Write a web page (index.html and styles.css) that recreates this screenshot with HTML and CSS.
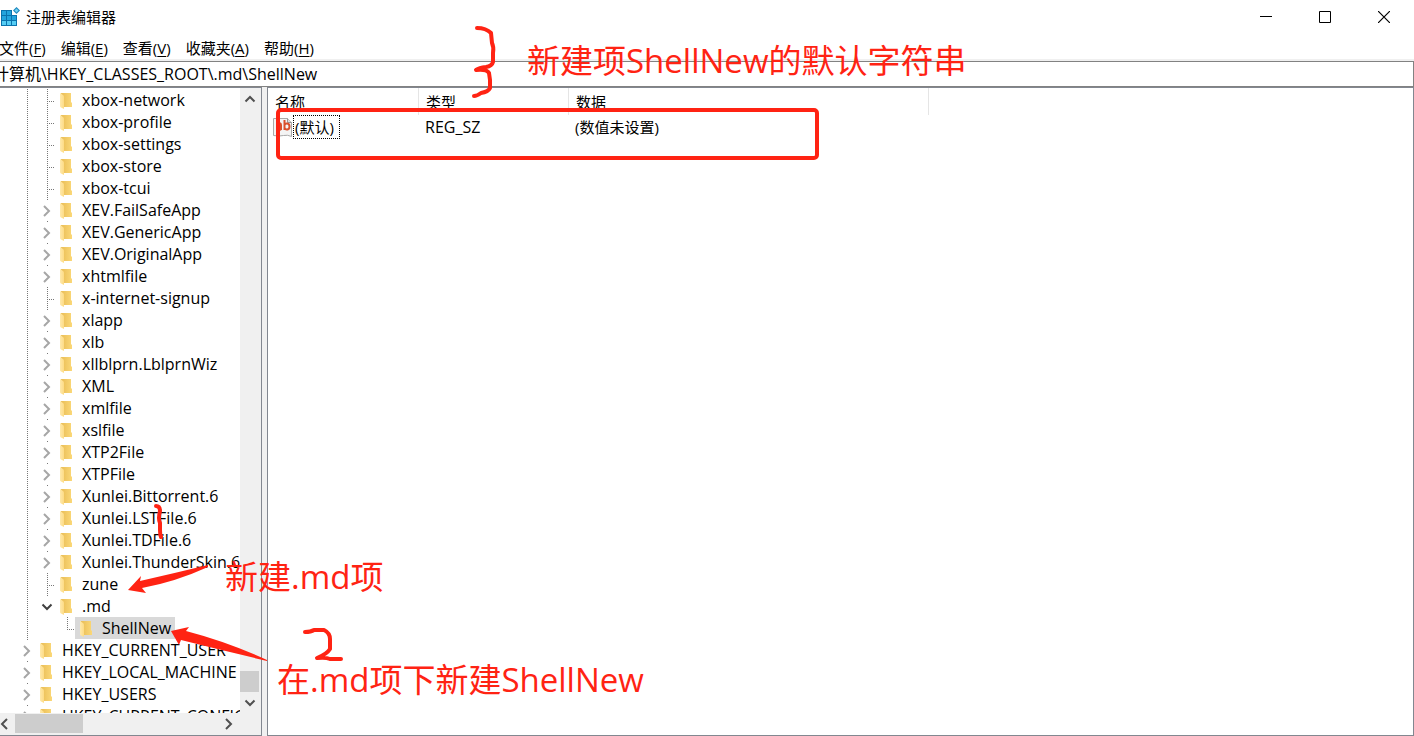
FILE: index.html
```html
<!DOCTYPE html>
<html lang="zh-CN">
<head>
<meta charset="utf-8">
<title>注册表编辑器</title>
<link rel="stylesheet" href="styles.css">
</head>
<body>
<svg class="defs" width="0" height="0" aria-hidden="true">
  <linearGradient id="fold-front" x1="0" y1="0" x2="1" y2="0"><stop offset="0" stop-color="#ffe9ab"/><stop offset="1" stop-color="#fddb85"/></linearGradient>
  <linearGradient id="fold-back" x1="0" y1="0" x2="1" y2="0"><stop offset="0" stop-color="#e9bd55"/><stop offset="1" stop-color="#fbd878"/></linearGradient>
  <symbol id="folder" viewBox="0 0 12 17"><path d="M1 1h10v9l1 1v4H3z" fill="url(#fold-back)"/><path d="M0 1l3 2q1 .5 1 2v12l-3-1.500q-1-.5-1-1.500z" fill="url(#fold-front)"/></symbol>
  <symbol id="right" viewBox="0 0 8 12"><path d="M1 1l5 5-5 5" fill="none" stroke="currentColor" stroke-width="2"/></symbol>
  <symbol id="down" viewBox="0 0 12 8"><path d="M1.500 1.500L6 6l4.500-4.500" fill="none" stroke="currentColor" stroke-width="2"/></symbol>
</svg>

<div class="window">
  <header class="titlebar">
    <svg class="app-icon" viewBox="0 0 20 20"><path d="M1 3h11v5h5v11H1z" fill="#0a73ad"/><path d="M2 4h4v4H2zM7 4h4v4H7zM2 9h4v4H2zM7 9h4v4H7zM12 9h4v4h-4z" fill="#23a4dd"/><path d="M2 14h4v4H2zM7 14h4v4H7zM12 14h4v4h-4z" fill="#55cdf4"/><path d="M16.500 0l3.500 3.500-3.500 3.500L13 3.500z" fill="#1b87be"/><path d="M16.500 1.500l2 2-2 2-2-2z" fill="#6fd0f2"/></svg>
    <h1 class="title">注册表编辑器</h1>
    <div class="window-buttons">
      <button class="window-button" aria-label="最小化"><svg width="12" height="12"><path d="M0 5.500h12" stroke="#000"/></svg></button>
      <button class="window-button" aria-label="最大化"><svg width="12" height="12"><path d="M.5.5h11v11H.5z" fill="none" stroke="#000"/></svg></button>
      <button class="window-button" aria-label="关闭"><svg width="12" height="12"><path d="M0 0l12 12M12 0L0 12" stroke="#000" stroke-width="1.200"/></svg></button>
    </div>
  </header>

  <nav class="menubar">
    <button class="menu">文件(<u>F</u>)</button>
    <button class="menu">编辑(<u>E</u>)</button>
    <button class="menu">查看(<u>V</u>)</button>
    <button class="menu">收藏夹(<u>A</u>)</button>
    <button class="menu">帮助(<u>H</u>)</button>
  </nav>

  <input class="address" type="text" aria-label="地址" value="计算机\HKEY_CLASSES_ROOT\.md\ShellNew">

  <main class="panes">
    <section class="tree-pane">
      <ul class="tree">
        <li class="row"><i class="guide line"></i><i class="guide line tee"></i><span class="label"><svg class="folder"><use href="#folder"/></svg>xbox-network</span></li>
        <li class="row"><i class="guide line"></i><i class="guide line tee"></i><span class="label"><svg class="folder"><use href="#folder"/></svg>xbox-profile</span></li>
        <li class="row"><i class="guide line"></i><i class="guide line tee"></i><span class="label"><svg class="folder"><use href="#folder"/></svg>xbox-settings</span></li>
        <li class="row"><i class="guide line"></i><i class="guide line tee"></i><span class="label"><svg class="folder"><use href="#folder"/></svg>xbox-store</span></li>
        <li class="row"><i class="guide line"></i><i class="guide line tee"></i><span class="label"><svg class="folder"><use href="#folder"/></svg>xbox-tcui</span></li>
        <li class="row"><i class="guide line"></i><button class="guide toggle" aria-label="展开"><svg width="8" height="12"><use href="#right"/></svg></button><span class="label"><svg class="folder"><use href="#folder"/></svg>XEV.FailSafeApp</span></li>
        <li class="row"><i class="guide line"></i><button class="guide toggle" aria-label="展开"><svg width="8" height="12"><use href="#right"/></svg></button><span class="label"><svg class="folder"><use href="#folder"/></svg>XEV.GenericApp</span></li>
        <li class="row"><i class="guide line"></i><button class="guide toggle" aria-label="展开"><svg width="8" height="12"><use href="#right"/></svg></button><span class="label"><svg class="folder"><use href="#folder"/></svg>XEV.OriginalApp</span></li>
        <li class="row"><i class="guide line"></i><button class="guide toggle" aria-label="展开"><svg width="8" height="12"><use href="#right"/></svg></button><span class="label"><svg class="folder"><use href="#folder"/></svg>xhtmlfile</span></li>
        <li class="row"><i class="guide line"></i><i class="guide line tee"></i><span class="label"><svg class="folder"><use href="#folder"/></svg>x-internet-signup</span></li>
        <li class="row"><i class="guide line"></i><button class="guide toggle" aria-label="展开"><svg width="8" height="12"><use href="#right"/></svg></button><span class="label"><svg class="folder"><use href="#folder"/></svg>xlapp</span></li>
        <li class="row"><i class="guide line"></i><button class="guide toggle" aria-label="展开"><svg width="8" height="12"><use href="#right"/></svg></button><span class="label"><svg class="folder"><use href="#folder"/></svg>xlb</span></li>
        <li class="row"><i class="guide line"></i><button class="guide toggle" aria-label="展开"><svg width="8" height="12"><use href="#right"/></svg></button><span class="label"><svg class="folder"><use href="#folder"/></svg>xllblprn.LblprnWiz</span></li>
        <li class="row"><i class="guide line"></i><button class="guide toggle" aria-label="展开"><svg width="8" height="12"><use href="#right"/></svg></button><span class="label"><svg class="folder"><use href="#folder"/></svg>XML</span></li>
        <li class="row"><i class="guide line"></i><button class="guide toggle" aria-label="展开"><svg width="8" height="12"><use href="#right"/></svg></button><span class="label"><svg class="folder"><use href="#folder"/></svg>xmlfile</span></li>
        <li class="row"><i class="guide line"></i><button class="guide toggle" aria-label="展开"><svg width="8" height="12"><use href="#right"/></svg></button><span class="label"><svg class="folder"><use href="#folder"/></svg>xslfile</span></li>
        <li class="row"><i class="guide line"></i><button class="guide toggle" aria-label="展开"><svg width="8" height="12"><use href="#right"/></svg></button><span class="label"><svg class="folder"><use href="#folder"/></svg>XTP2File</span></li>
        <li class="row"><i class="guide line"></i><button class="guide toggle" aria-label="展开"><svg width="8" height="12"><use href="#right"/></svg></button><span class="label"><svg class="folder"><use href="#folder"/></svg>XTPFile</span></li>
        <li class="row"><i class="guide line"></i><button class="guide toggle" aria-label="展开"><svg width="8" height="12"><use href="#right"/></svg></button><span class="label"><svg class="folder"><use href="#folder"/></svg>Xunlei.Bittorrent.6</span></li>
        <li class="row"><i class="guide line"></i><button class="guide toggle" aria-label="展开"><svg width="8" height="12"><use href="#right"/></svg></button><span class="label"><svg class="folder"><use href="#folder"/></svg>Xunlei.LSTFile.6</span></li>
        <li class="row"><i class="guide line"></i><button class="guide toggle" aria-label="展开"><svg width="8" height="12"><use href="#right"/></svg></button><span class="label"><svg class="folder"><use href="#folder"/></svg>Xunlei.TDFile.6</span></li>
        <li class="row"><i class="guide line"></i><button class="guide toggle" aria-label="展开"><svg width="8" height="12"><use href="#right"/></svg></button><span class="label"><svg class="folder"><use href="#folder"/></svg>Xunlei.ThunderSkin.6</span></li>
        <li class="row"><i class="guide line"></i><i class="guide line tee"></i><span class="label"><svg class="folder"><use href="#folder"/></svg>zune</span></li>
        <li class="row"><i class="guide line"></i><button class="guide toggle open" aria-label="折叠"><svg width="12" height="8"><use href="#down"/></svg></button><span class="label"><svg class="folder"><use href="#folder"/></svg>.md</span></li>
        <li class="row"><i class="guide line"></i><i class="guide"></i><i class="guide line tee last"></i><span class="label selected"><svg class="folder"><use href="#folder"/></svg>ShellNew</span></li>
        <li class="row"><button class="guide toggle" aria-label="展开"><svg width="8" height="12"><use href="#right"/></svg></button><span class="label"><svg class="folder"><use href="#folder"/></svg>HKEY_CURRENT_USER</span></li>
        <li class="row"><button class="guide toggle" aria-label="展开"><svg width="8" height="12"><use href="#right"/></svg></button><span class="label"><svg class="folder"><use href="#folder"/></svg>HKEY_LOCAL_MACHINE</span></li>
        <li class="row"><button class="guide toggle" aria-label="展开"><svg width="8" height="12"><use href="#right"/></svg></button><span class="label"><svg class="folder"><use href="#folder"/></svg>HKEY_USERS</span></li>
        <li class="row"><button class="guide toggle" aria-label="展开"><svg width="8" height="12"><use href="#right"/></svg></button><span class="label"><svg class="folder"><use href="#folder"/></svg>HKEY_CURRENT_CONFIG</span></li>
      </ul>
      <div class="vscroll">
        <button class="scroll-button flip" aria-label="向上"><svg width="12" height="8"><use href="#down"/></svg></button>
        <div class="track"></div>
        <div class="thumb"></div>
        <button class="scroll-button" aria-label="向下"><svg width="12" height="8"><use href="#down"/></svg></button>
      </div>
      <div class="hscroll">
        <button class="scroll-button flip" aria-label="向左"><svg width="8" height="12"><use href="#right"/></svg></button>
        <div class="thumb"></div>
        <div class="track"></div>
        <button class="scroll-button" aria-label="向右"><svg width="8" height="12"><use href="#right"/></svg></button>
      </div>
    </section>

    <section class="list-pane">
      <table class="values">
        <colgroup><col class="col-name"><col class="col-type"><col class="col-data"><col></colgroup>
        <thead><tr><th>名称</th><th>类型</th><th>数据</th><td></td></tr></thead>
        <tbody><tr>
          <td class="name-cell"><div class="value-name"><svg class="value-icon" viewBox="0 0 20 20"><path d="M.5 1.500h14l4 4v14q-4-2-8-1t-10 0z" fill="#f4f4f4" stroke="#aaa"/><path d="M14.500 1.500v4h4" fill="#ddd" stroke="#999"/><g fill="none" stroke="#d9512c" stroke-width="2"><path d="M4 7q4-2 4 1v5M8 9q-4 0-4 2t2 2q2 0 2-2M11.500 3v10M11.500 8q1-2 3-1.500 2 .5 2 3t-2 3q-2 .5-3-1.500"/></g></svg><span class="focused">(默认)</span></div></td>
          <td class="latin">REG_SZ</td><td>(数值未设置)</td><td></td>
        </tr></tbody>
      </table>
    </section>
  </main>

  <div class="notes">
    <svg class="ink" width="1414" height="736">
      <g fill="none" stroke="#ff2313" stroke-width="4" stroke-linecap="round" stroke-linejoin="round">
        <path d="M477 28q9 0 14 5l1 10q2 4 1 10v9q-1 4-7 5-7 1-10 3 11-1 13 3l1 7v8q-2 4-9 5-4 3-7 3" />
        <rect x="278" y="110" width="539" height="48" rx="3"/>
        <path d="M156 506q4 0 4 5-2 8 0 12v7q0 5 1 7"/>
        <path d="M305 632q6 0 9-2h10q6 3 6 9v10q-3 5-13 9 9-1 13 1l11 0"/>
      </g>
      <path d="M128 590L141 576L140 581Q175 573 208 565V567Q175 582 142 588L146 593Z" fill="#ff2313"/>
      <path d="M171 631L189 627L186 631Q228 642 267 660V661Q225 651 181 640L179 645Z" fill="#ff2313"/>
    </svg>
    <p class="note note-string">新建项ShellNew的默认字符串</p>
    <p class="note note-md">新建.md项</p>
    <p class="note note-shell">在.md项下新建ShellNew</p>
  </div>
</div>
</body>
</html>
```
FILE: styles.css
```css
* { box-sizing: border-box; }
body {
  margin: 0;
  font: 15px/22px "Open Sans", "Noto Sans CJK SC", sans-serif;
  color: #000;
  background: #fff;
}
button, input { font: inherit; color: inherit; border: 0; padding: 0; background: none; }
svg { display: block; flex: none; }
.defs { position: absolute; }
.window {
  position: relative;
  display: flex;
  flex-direction: column;
  height: 100vh;
  overflow: hidden;
}
.titlebar { display: flex; align-items: center; height: 34px; }
.app-icon { width: 20px; height: 20px; }
.title { flex: 1; margin: 0 0 0 6px; font-size: 15px; font-weight: 400; }
.window-buttons { display: flex; padding-right: 1px; }
.window-button { display: grid; place-items: center; width: 59px; height: 34px; }

.menubar {
  display: flex;
  align-items: center;
  gap: 1px;
  height: 27px;
  padding-top: 3px;
  margin-left: -8px;
  border-bottom: 2px solid #f0f0f0;
}
.menu { padding: 0 7px; white-space: nowrap; }
.menu u { text-underline-offset: 2px; }
.address {
  width: 100%;
  height: 26px;
  padding-bottom: 2px;
  border: 1px solid #828282;
  border-left: 0;
  font-size: 16px;
  text-indent: -7px;
  outline: 0;
}

.panes { flex: 1; display: flex; min-height: 0; background: #f0f0f0; }
.tree-pane {
  display: grid;
  grid-template: minmax(0, 1fr) 21px / minmax(0, 1fr) 20px;
  width: 262px;
  padding: 0 1px 1px 0;
  margin-right: 5px;
  border: 1px solid #828790;
  border-left: 0;
  background: #f0f0f0;
}
.tree { margin: 0; padding: 1px 0 0; overflow: hidden; list-style: none; font-size: 16px; background: #fff; }
.row { display: flex; height: 22px; padding-left: 15px; white-space: nowrap; }
.guide { flex: none; width: 20px; height: 22px; }
.line {
  background: repeating-linear-gradient(#777 0 1px, transparent 1px 2px) 12px 0 / 1px 22px no-repeat;
}
.tee {
  background:
    repeating-linear-gradient(#777 0 1px, transparent 1px 2px) 12px 0 / 1px 22px no-repeat,
    repeating-linear-gradient(90deg, #777 0 1px, transparent 1px 2px) 12px 12px / 8px 1px no-repeat;
}
.tee.last { background-size: 1px 12px, 8px 1px; }
.toggle {
  display: grid;
  place-items: center;
  padding: 2px 0 0 4px;
  color: #a6a6a6;
  background: linear-gradient(#777, #777) 12px 0 / 1px 1px no-repeat;
}
.toggle.open { color: #404040; }
.label { display: flex; align-items: center; padding: 0 4px 0 5px; }
.selected { background: #d9d9d9; }
.folder { width: 12px; height: 17px; margin-right: 10px; }

.vscroll { display: flex; flex-direction: column; background: #f0f0f0; }
.hscroll { grid-column: 1 / -1; display: flex; width: 240px; padding-top: 1px; }
.scroll-button { display: grid; place-items: center; flex: none; color: #505050; }
.flip svg { transform: rotate(180deg); }
.track { flex: 1; }
.thumb { background: #cdcdcd; }
.vscroll .scroll-button { height: 21px; }
.vscroll .thumb { width: 19px; height: 21px; }
.hscroll .scroll-button { width: 23px; }
.hscroll .flip { width: 15px; padding-right: 7px; }
.hscroll .thumb { width: 68px; height: 19px; }

.list-pane { flex: 1; min-width: 0; border: 1px solid #828790; background: #fff; }
.values { width: 100%; table-layout: fixed; border-collapse: separate; border-spacing: 0; }
.col-name { width: 151px; }
.col-type { width: 150px; }
.col-data { width: 360px; }
.values th {
  height: 27px;
  padding: 0 0 0 7px;
  border-right: 1px solid #e5e5e5;
  font-weight: 400;
  text-align: left;
}
.values td { padding: 0 6px; }
.values .latin { font-size: 16px; }
.values .name-cell { padding: 0 0 0 5px; }
.value-name { display: flex; align-items: center; }
.value-icon { width: 20px; height: 20px; }
.focused { padding: 0 5px 0 1px; border: 1px dotted #000; }

.notes { position: absolute; inset: 0; pointer-events: none; }
.ink { position: absolute; top: 0; left: 0; }
.note {
  position: absolute;
  margin: 0;
  font-size: 33px;
  line-height: 44px;
  color: #ff2313;
  white-space: nowrap;
}
.note-string { left: 527px; top: 39px; }
.note-md { left: 225px; top: 555px; }
.note-shell { left: 277px; top: 658px; }
```
